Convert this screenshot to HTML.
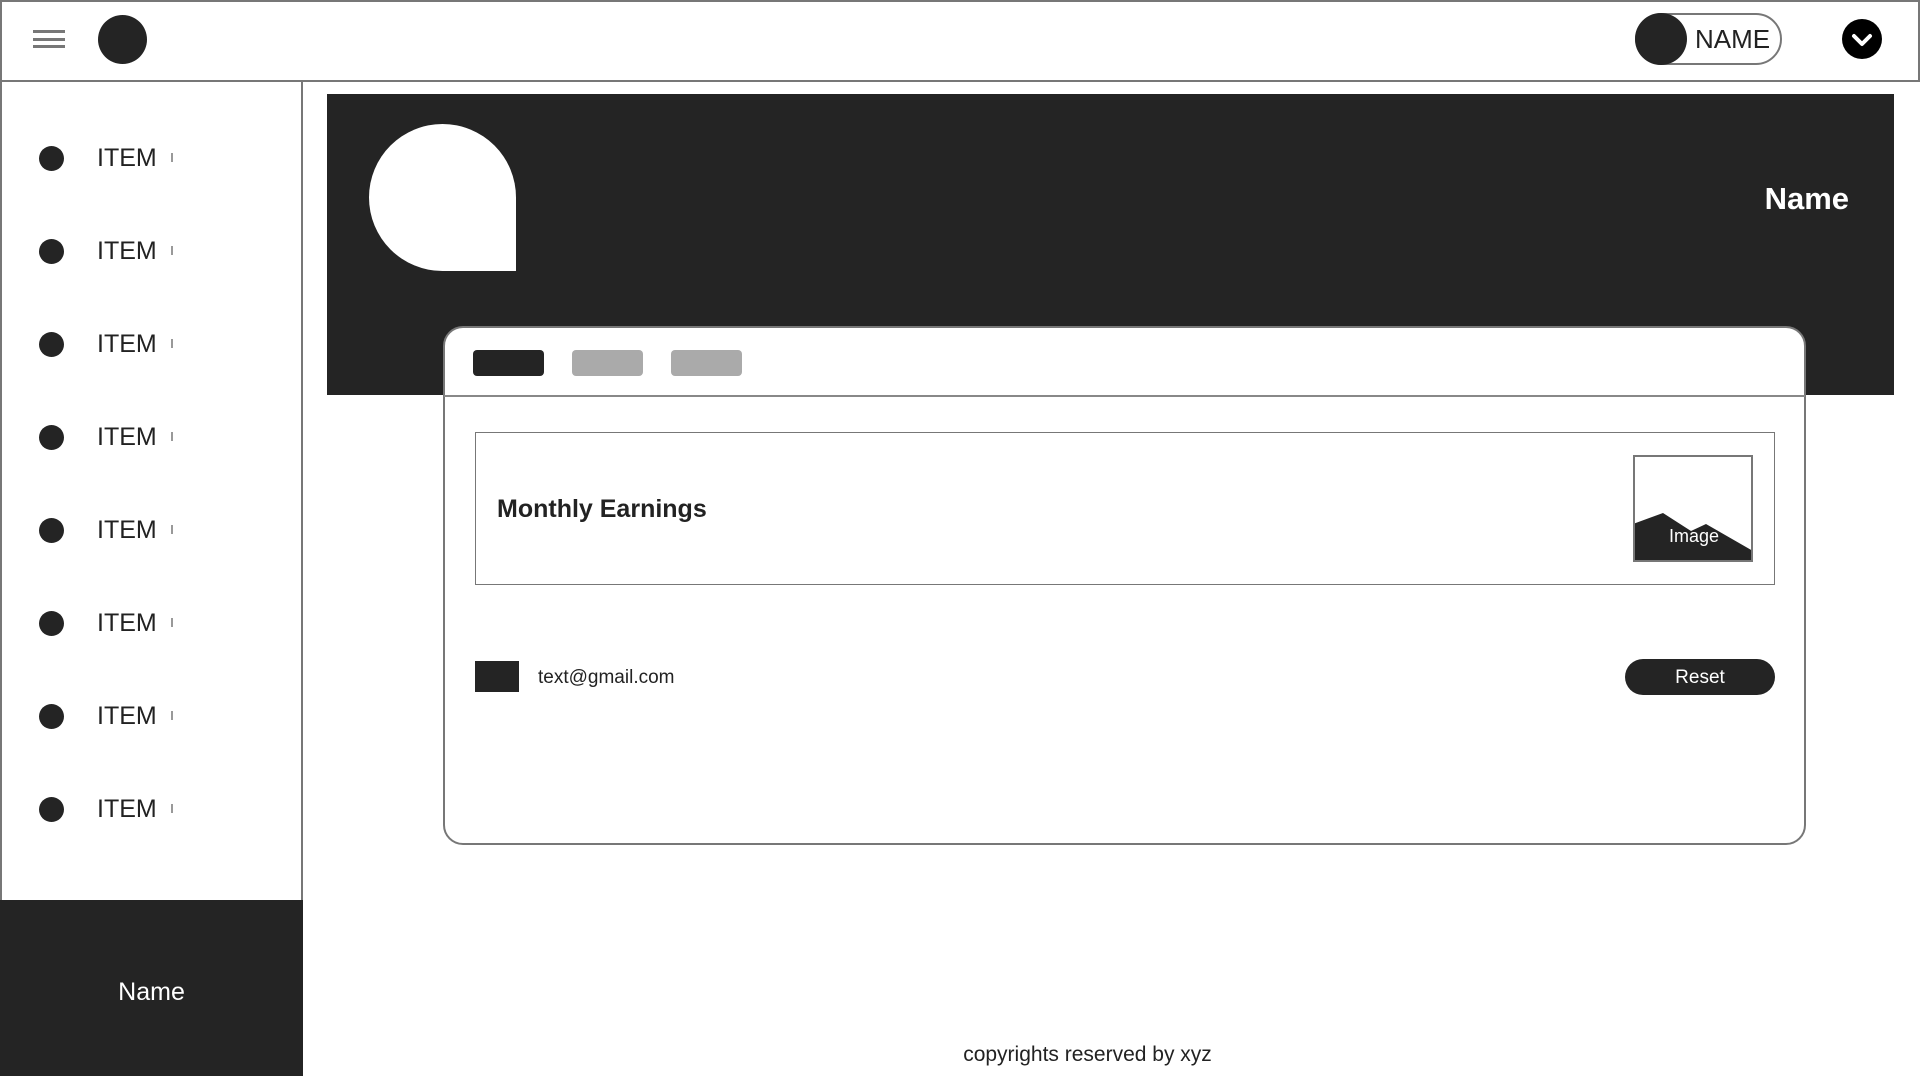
<!DOCTYPE html>
<html><head><meta charset="utf-8"><style>
*{margin:0;padding:0;box-sizing:border-box}
body{width:1920px;height:1076px;position:relative;background:#fff;font-family:"Liberation Sans",sans-serif;color:#222;overflow:hidden}
.a{position:absolute}
.dk{background:#242424}
.it{font-size:25px}
</style></head><body>
<div class="a" style="left:0;top:0;width:1920px;height:82px;border:2px solid #777"></div>
<div class="a" style="left:33px;top:30px;width:32px;height:3px;background:#777"></div>
<div class="a" style="left:33px;top:38px;width:32px;height:3px;background:#777"></div>
<div class="a" style="left:33px;top:45px;width:32px;height:3px;background:#777"></div>
<div class="a dk" style="left:98px;top:15px;width:49px;height:49px;border-radius:50%"></div>
<div class="a" style="left:1635px;top:13px;width:147px;height:52px;border:2px solid #777;border-radius:26px"></div>
<div class="a dk" style="left:1635px;top:13px;width:52px;height:52px;border-radius:50%"></div>
<div class="a" style="left:1695px;top:22px;font-size:26px;line-height:34px">NAME</div>
<div class="a" style="left:1842px;top:19px;width:40px;height:40px;border-radius:50%;background:#000"></div>
<svg class="a" style="left:1842px;top:19px" width="40" height="40"><path d="M12 17 L20 25 L28 17" stroke="#fff" stroke-width="4" fill="none" stroke-linecap="round" stroke-linejoin="round"/></svg>

<div class="a" style="left:0;top:81px;width:303px;height:995px;border:2px solid #777;border-top:none"></div>
<div class="a dk" style="left:0;top:900px;width:303px;height:176px"></div>
<div class="a" style="left:0;top:978px;width:303px;text-align:center;color:#fff;font-size:25px">Name</div>

<div class="a dk" style="left:327px;top:94px;width:1567px;height:301px"></div>
<div class="a" style="left:369px;top:124px;width:147px;height:147px;background:#fff;border-radius:74px 74px 0 74px"></div>
<div class="a" style="right:71px;top:181px;color:#fff;font-size:31px;font-weight:bold">Name</div>

<div class="a" style="left:443px;top:326px;width:1363px;height:519px;background:#fff;border:2px solid #777;border-radius:20px"></div>
<div class="a" style="left:444px;top:395px;width:1361px;height:2px;background:#888"></div>
<div class="a dk" style="left:473px;top:350px;width:71px;height:26px;border-radius:4px"></div>
<div class="a" style="left:572px;top:350px;width:71px;height:26px;border-radius:4px;background:#aaa"></div>
<div class="a" style="left:671px;top:350px;width:71px;height:26px;border-radius:4px;background:#aaa"></div>
<div class="a" style="left:475px;top:432px;width:1300px;height:153px;border:1.5px solid #777"></div>
<div class="a" style="left:497px;top:495px;font-size:25px;font-weight:bold">Monthly Earnings</div>
<div class="a" style="left:1633px;top:455px;width:120px;height:107px;border:2px solid #777;overflow:hidden">
<svg width="120" height="107" style="position:absolute;left:-2px;top:-2px"><path d="M0 69 L30 58 L58 76 L73 69 L120 96 L120 107 L0 107Z" fill="#242424"/></svg>
<div style="position:absolute;left:0;width:118px;top:69px;text-align:center;color:#fff;font-size:18px">Image</div></div>
<div class="a dk" style="left:475px;top:661px;width:44px;height:31px"></div>
<div class="a" style="left:538px;top:667px;font-size:19px">text@gmail.com</div>
<div class="a dk" style="left:1625px;top:659px;width:150px;height:36px;border-radius:18px;color:#fff;font-size:19px;text-align:center;line-height:38px">Reset</div>
<div class="a" style="left:0;top:1043px;width:2175px;text-align:center;font-size:21px">copyrights reserved by xyz</div>

<div class="a dk" style="left:39px;top:146px;width:25px;height:25px;border-radius:50%"></div><div class="a it" style="left:97px;top:144px">ITEM</div><div class="a" style="left:171px;top:153px;width:2px;height:9px;background:#999"></div>
<div class="a dk" style="left:39px;top:239px;width:25px;height:25px;border-radius:50%"></div><div class="a it" style="left:97px;top:237px">ITEM</div><div class="a" style="left:171px;top:246px;width:2px;height:9px;background:#999"></div>
<div class="a dk" style="left:39px;top:332px;width:25px;height:25px;border-radius:50%"></div><div class="a it" style="left:97px;top:330px">ITEM</div><div class="a" style="left:171px;top:339px;width:2px;height:9px;background:#999"></div>
<div class="a dk" style="left:39px;top:425px;width:25px;height:25px;border-radius:50%"></div><div class="a it" style="left:97px;top:423px">ITEM</div><div class="a" style="left:171px;top:432px;width:2px;height:9px;background:#999"></div>
<div class="a dk" style="left:39px;top:518px;width:25px;height:25px;border-radius:50%"></div><div class="a it" style="left:97px;top:516px">ITEM</div><div class="a" style="left:171px;top:525px;width:2px;height:9px;background:#999"></div>
<div class="a dk" style="left:39px;top:611px;width:25px;height:25px;border-radius:50%"></div><div class="a it" style="left:97px;top:609px">ITEM</div><div class="a" style="left:171px;top:618px;width:2px;height:9px;background:#999"></div>
<div class="a dk" style="left:39px;top:704px;width:25px;height:25px;border-radius:50%"></div><div class="a it" style="left:97px;top:702px">ITEM</div><div class="a" style="left:171px;top:711px;width:2px;height:9px;background:#999"></div>
<div class="a dk" style="left:39px;top:797px;width:25px;height:25px;border-radius:50%"></div><div class="a it" style="left:97px;top:795px">ITEM</div><div class="a" style="left:171px;top:804px;width:2px;height:9px;background:#999"></div>
</body></html>
